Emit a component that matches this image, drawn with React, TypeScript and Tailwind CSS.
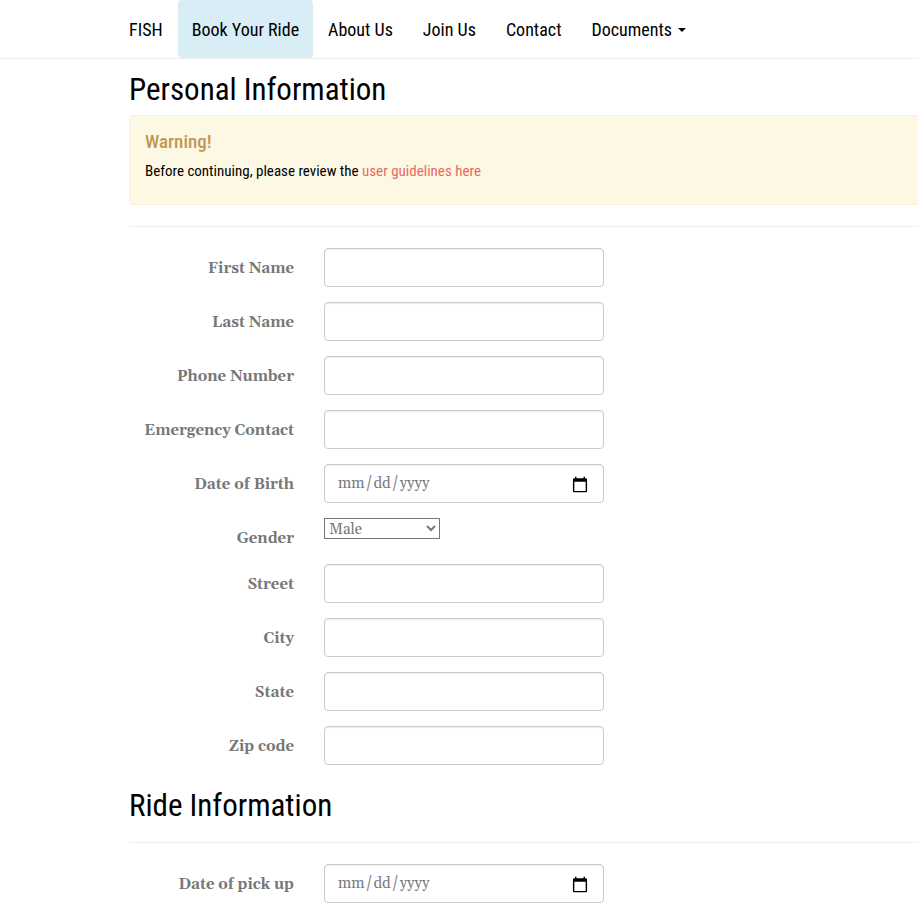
import React from "react";

const heading =
  "font-['Roboto_Condensed','Liberation_Sans',sans-serif] text-black";
const control =
  "block h-[39px] w-full max-w-[280px] rounded border border-[#cccccc] bg-white px-3 text-[15px] text-[#777777] shadow-[inset_0_1px_1px_rgba(0,0,0,0.075)]";

type FieldProps = { id: string; label: string; children: React.ReactNode };

function Row({ id, label, children }: FieldProps) {
  return (
    <div className="flex items-start gap-[30px]">
      <label
        htmlFor={id}
        className="w-[165px] shrink-0 pt-[11px] text-right text-[15px] leading-5 font-bold whitespace-nowrap"
      >
        {label}
      </label>
      <div className="min-w-0 flex-1">{children}</div>
    </div>
  );
}

function TextRow({ id, label }: { id: string; label: string }) {
  return (
    <Row id={id} label={label}>
      <input id={id} type="text" className={control} />
    </Row>
  );
}

function DateRow({ id, label }: { id: string; label: string }) {
  return (
    <Row id={id} label={label}>
      <input
        id={id}
        type="date"
        className={`pt-0.5 [&::-webkit-calendar-picker-indicator]:size-[18px] [&::-webkit-calendar-picker-indicator]:p-0.5 ${control}`}
      />
    </Row>
  );
}

const links = ["About Us", "Join Us", "Contact"];

export default function App() {
  return (
    <div className="min-h-screen overflow-x-hidden bg-white pb-[15px] font-['Gelasio','Liberation_Serif',serif] text-[#777777]">
      <header className="border-b border-[#eeeeee] pl-[114px]">
        <nav className={`flex h-[58px] text-[18px] whitespace-nowrap ${heading}`}>
          <a href="#home" className="flex items-center px-[15px]">
            FISH
          </a>
          <a
            href="#book"
            className="flex items-center rounded bg-[#d9edf7] px-3.5"
          >
            Book Your Ride
          </a>
          {links.map((text) => (
            <a key={text} href="#page" className="flex items-center px-[15px]">
              {text}
            </a>
          ))}
          <button
            type="button"
            aria-haspopup="menu"
            className="flex items-center gap-1.5 px-[15px]"
          >
            Documents
            <span className="mt-0.5 border-x-4 border-t-4 border-x-transparent border-t-black" />
          </button>
        </nav>
      </header>

      <main className="pl-[129px]">
        <h2 className={`pt-3 text-[31px] leading-[38px] ${heading}`}>
          Personal Information
        </h2>
        <section className="mt-1.5 h-[90px] rounded-l border border-r-0 border-[#fbeed5] bg-[#fcf8e3] px-[15px] pt-4">
          <h4 className="font-['Roboto_Condensed','Liberation_Sans',sans-serif] text-[19px] leading-5 font-medium text-[#c09853]">
            Warning!
          </h4>
          <p className={`mt-2 text-[15px] leading-[22px] ${heading}`}>
            Before continuing, please review the{" "}
            <a href="#guidelines" className="text-[#eb6864]">
              user guidelines here
            </a>
          </p>
        </section>
        <hr className="mt-[21px] border-[#eeeeee]" />

        <form className="mt-[21px]">
          <div className="flex flex-col gap-[15px]">
            <TextRow id="first" label="First Name" />
            <TextRow id="last" label="Last Name" />
            <TextRow id="phone" label="Phone Number" />
            <TextRow id="emergency" label="Emergency Contact" />
            <DateRow id="birth" label="Date of Birth" />
            <Row id="gender" label="Gender">
              <select
                id="gender"
                className="block h-[21px] w-[116px] border border-[#767676] bg-white text-[15px] leading-[18px] text-[#777777]"
              >
                <option>Male</option>
                <option>Female</option>
              </select>
            </Row>
            <TextRow id="street" label="Street" />
            <TextRow id="city" label="City" />
            <TextRow id="state" label="State" />
            <TextRow id="zip" label="Zip code" />
          </div>

          <h2 className={`mt-[22px] text-[31px] leading-[38px] ${heading}`}>
            Ride Information
          </h2>
          <hr className="mt-[17px] mb-[21px] border-[#eeeeee]" />
          <DateRow id="pickup" label="Date of pick up" />
        </form>
      </main>
    </div>
  );
}
